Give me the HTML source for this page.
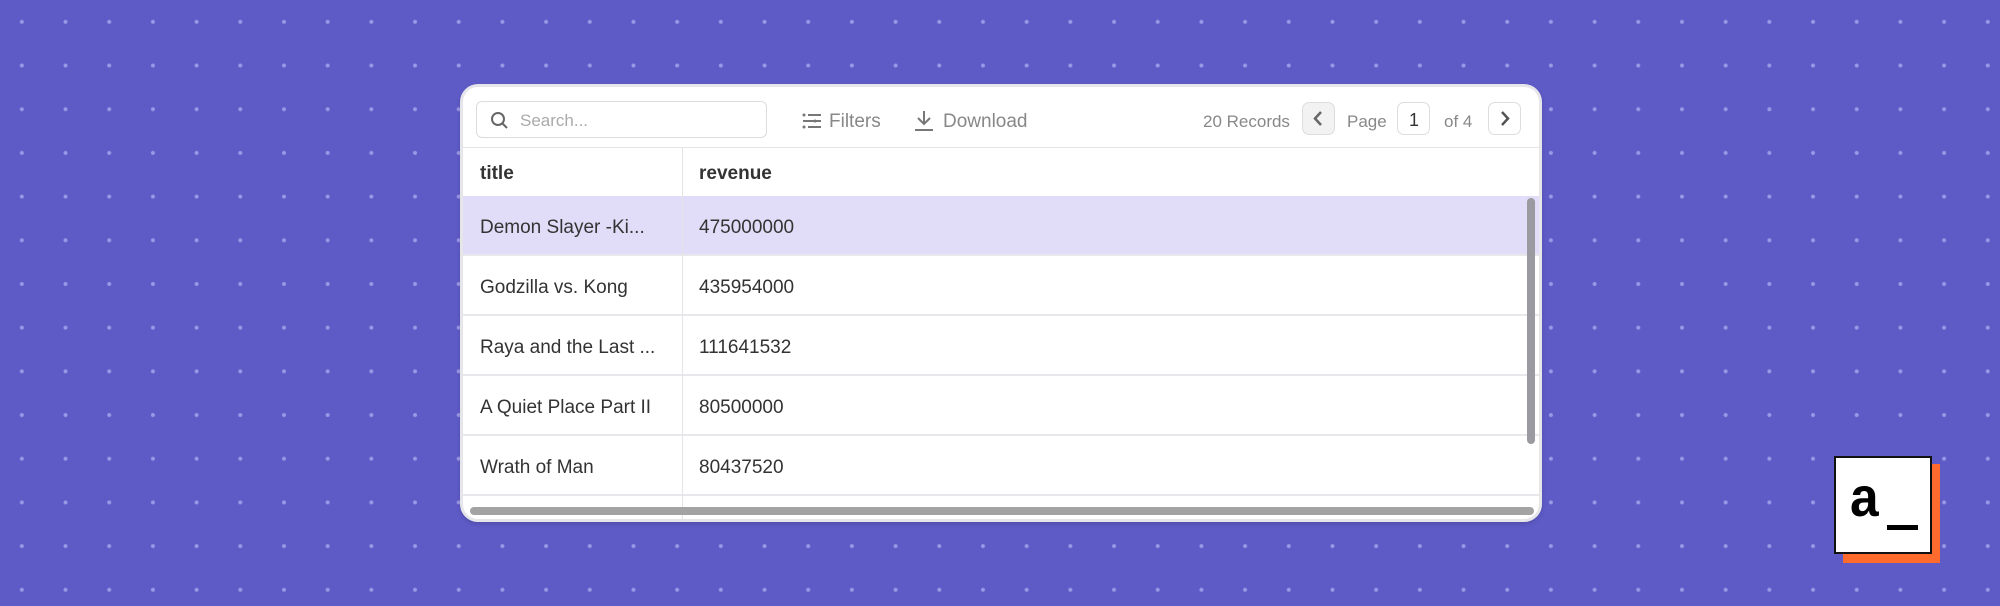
<!DOCTYPE html>
<html><head><style>
*{box-sizing:border-box;margin:0;padding:0}
body{width:2000px;height:606px;overflow:hidden;background-color:#5e5bc7;
background-image:radial-gradient(circle,#9b98e6 1.6px,rgba(0,0,0,0) 2.4px);
background-size:43.7px 43.7px;background-position:0px 0px;font-family:"Liberation Sans",sans-serif;position:relative}
.card{position:absolute;left:460px;top:84px;width:1082px;height:438px;background:#fff;border-radius:18px;border:3px solid #e6e6ea;box-shadow:0 2px 4px rgba(0,0,0,.15);overflow:hidden}
.tb{position:absolute;left:0;top:0;right:0;height:61px;border-bottom:1px solid #e4e4e4}
.search{position:absolute;left:13px;top:14px;width:291px;height:37px;border:1px solid #dcdcdc;border-radius:6px}
.search span{position:absolute;left:43px;top:9px;font-size:17px;color:#aaa}
.t{position:absolute;font-size:19px;color:#888}
.btn{position:absolute;top:15px;width:33px;height:33px;border:1px solid #ddd;border-radius:7px}
.row{position:absolute;left:0;width:1076px;height:60px;border-bottom:2px solid #e8e8ec}
.row div{position:absolute;top:21px;font-size:19px;color:#333}
.c1{left:17px}.c2{left:236px}
.vdiv{position:absolute;left:219px;top:61px;width:1px;height:380px;background:#e4e4e4}
</style></head><body>
<div class="card">
 <div class="tb">
  <div class="search"><svg style="position:absolute;left:13px;top:9px" width="20" height="20" viewBox="0 0 20 20"><circle cx="8" cy="8" r="6" fill="none" stroke="#666" stroke-width="2"/><path d="M12.5 12.5L17 17" stroke="#666" stroke-width="2"/></svg><span>Search...</span></div>
  <svg style="position:absolute;left:339px;top:26px" width="20" height="16" viewBox="0 0 20 16"><path d="M6 2H19M1 8H19M6 14H19" stroke="#777" stroke-width="2"/><circle cx="2" cy="2" r="1.5" fill="#777"/><circle cx="13" cy="8" r="1.5" fill="#777"/><circle cx="2" cy="14" r="1.5" fill="#777"/></svg>
  <div class="t" style="left:366px;top:24px">Filters</div>
  <svg style="position:absolute;left:451px;top:23px" width="20" height="22" viewBox="0 0 20 22"><path d="M10 1V14M4 8L10 14L16 8M1 20H19" stroke="#777" stroke-width="2" fill="none"/></svg>
  <div class="t" style="left:480px;top:24px">Download</div>
  <div class="t" style="left:740px;top:25px;font-size:17px">20 Records</div>
  <div class="btn" style="left:839px;background:#f2f2f2"><svg width="31" height="31" viewBox="0 0 31 31"><path d="M18 9L12 15.5L18 22" stroke="#666" stroke-width="2.5" fill="none"/></svg></div>
  <div class="t" style="left:884px;top:25px;font-size:17px">Page</div>
  <div class="btn" style="left:934px"><div style="position:absolute;left:11px;top:7px;font-size:18px;color:#333">1</div></div>
  <div class="t" style="left:981px;top:25px;font-size:17px">of 4</div>
  <div class="btn" style="left:1025px"><svg width="31" height="31" viewBox="0 0 31 31"><path d="M13 9L19 15.5L13 22" stroke="#555" stroke-width="2.5" fill="none"/></svg></div>
 </div>
 <div class="row" style="top:61px;height:50px;border-bottom:1px solid #e4e4e4"><div class="c1" style="top:15px;font-weight:bold">title</div><div class="c2" style="top:15px;font-weight:bold">revenue</div></div>
 <div class="row" style="top:109px;background:#e1ddf8"><div class="c1">Demon Slayer -Ki...</div><div class="c2">475000000</div></div>
 <div class="row" style="top:169px"><div class="c1">Godzilla vs. Kong</div><div class="c2">435954000</div></div>
 <div class="row" style="top:229px"><div class="c1">Raya and the Last ...</div><div class="c2">111641532</div></div>
 <div class="row" style="top:289px"><div class="c1">A Quiet Place Part II</div><div class="c2">80500000</div></div>
 <div class="row" style="top:349px"><div class="c1">Wrath of Man</div><div class="c2">80437520</div></div>
 <div class="vdiv"></div>
 <div style="position:absolute;left:1064px;top:111px;width:8px;height:246px;border-radius:4px;background:#9a9aa0"></div>
 <div style="position:absolute;left:7px;top:420px;width:1064px;height:8px;border-radius:4px;background:#a3a3a3"></div>
</div>
<div style="position:absolute;left:1843px;top:464px;width:97px;height:99px;background:#ff6b2c"></div>
<div style="position:absolute;left:1834px;top:456px;width:98px;height:98px;background:#fff;border:2px solid #111">
 <div style="position:absolute;left:14px;top:6px;font-size:56px;font-weight:bold;color:#000;font-family:'Liberation Sans',sans-serif;transform:scaleX(.92);transform-origin:left">a</div>
 <div style="position:absolute;left:51px;top:67px;width:31px;height:5px;background:#000"></div>
</div>
</body></html>
